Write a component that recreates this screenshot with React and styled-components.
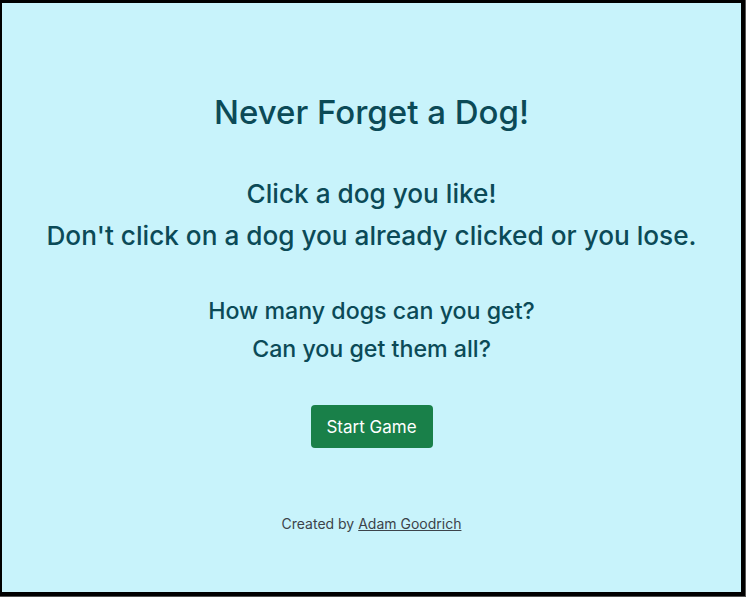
import React from "react";
import styled, { createGlobalStyle } from "styled-components";

const Global = createGlobalStyle`
  html, body { margin: 0; padding: 0; background: #555; }
  body { font-family: Inter, "Noto Sans", sans-serif; }
`;

const Frame = styled.div`
  box-sizing: border-box;
  height: 596px;
  width: 745px;
  background: #c8f3fb;
  border-style: solid;
  border-color: #000;
  border-width: 3px 4px 4px 2px;
  display: flex;
  flex-direction: column;
  align-items: center;
  color: #0b4a57;
  text-align: center;
`;

const Title = styled.h1`
  margin: 89px 0 0;
  font-size: 33px;
  font-weight: 500;
  line-height: 40px;
`;

const Block = styled.div`
  margin-top: ${(p) => p.$top}px;
  font-size: ${(p) => p.$size}px;
  line-height: ${(p) => p.$lh}px;
  font-weight: 500;
`;

const Button = styled.button`
  margin-top: 37px;
  width: 122px;
  height: 43px;
  background: #198049;
  color: #fff;
  border: none;
  border-radius: 4px;
  font-family: Inter, sans-serif;
  font-size: 17px;
  font-weight: 400;
`;

const Footer = styled.p`
  margin: 67px 0 0;
  font-size: 14px;
  color: #3c434a;
`;

const Link = styled.a`
  color: #3c434a;
  text-decoration: underline;
`;

export default function App() {
  return (
    <>
      <Global />
      <Frame>
        <Title>Never Forget a Dog!</Title>
        <Block $top={41} $size={26.2} $lh={42}>
          Click a dog you like!
          <br />
          Don't click on a dog you already clicked or you lose.
        </Block>
        <Block $top={35} $size={23.2} $lh={38}>
          How many dogs can you get?
          <br />
          Can you get them all?
        </Block>
        <Button>Start Game</Button>
        <Footer>
          Created by <Link href="#">Adam Goodrich</Link>
        </Footer>
      </Frame>
    </>
  );
}
